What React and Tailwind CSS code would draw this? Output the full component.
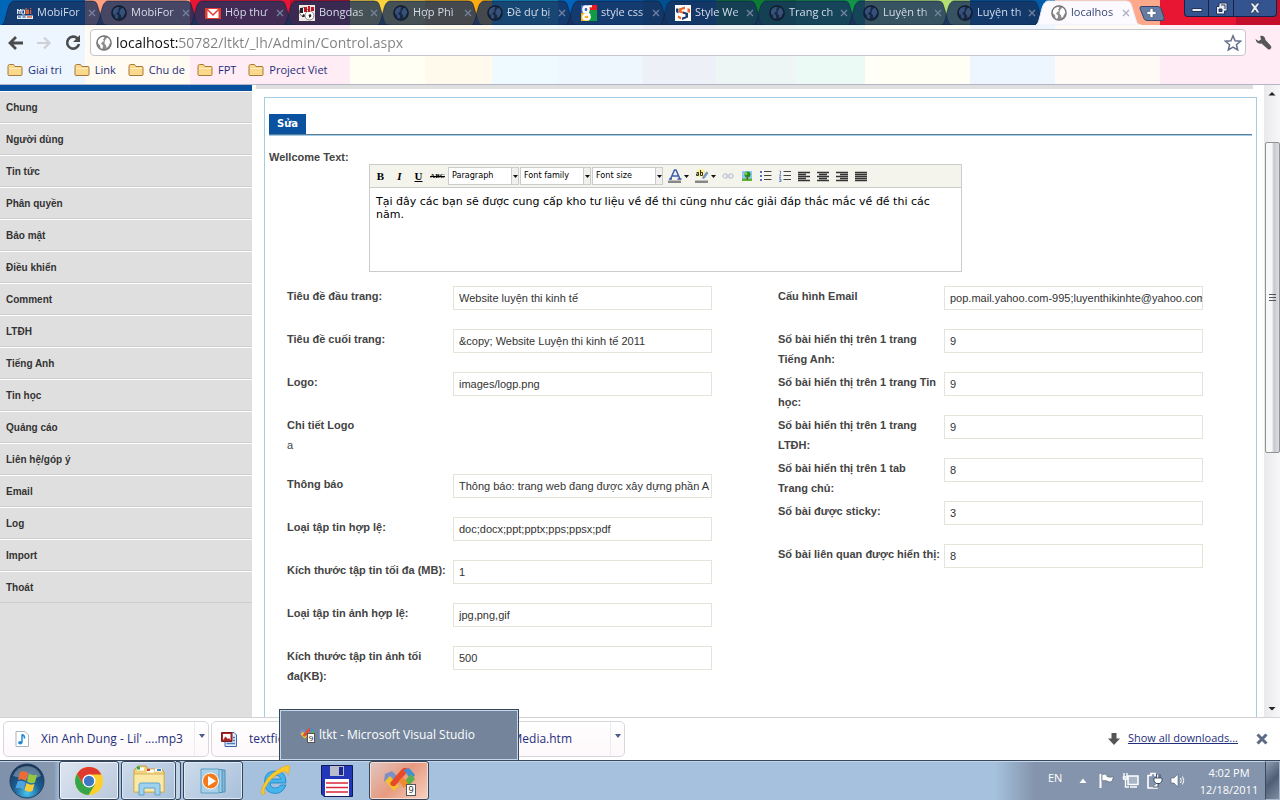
import React from "react";

function Globe({ dark }) {
  const land = dark ? "#36517c" : "#fff";
  const sea = dark ? "#1a2942" : "#8d8d8d";
  return (
    <svg viewBox="0 0 16 16" className="size-4 shrink-0" aria-hidden="true">
      <circle cx="8" cy="8" r="7.2" fill={sea} stroke={dark ? "#101a2c" : "#707070"} strokeWidth="1.2" />
      <path d="M2 5.500 4 3l3-1.300 1.500 1L7 4.500 8 6 6 7.200 5 9l1.800 1L7 12l-1 2-1.500-1L4 10 2 8.500z" fill={land} />
      <path d="m9.500 4.500 2-2 2 2.200.9 2.800-1 1.500-1.400 3-1.500.8-.5-2.600-1.500-1.400.2-2.300z" fill={land} />
    </svg>
  );
}

function MobiIcon() {
  return (
    <svg viewBox="0 0 16 16" className="size-4 shrink-0" aria-hidden="true">
      <path d="M0 4h1.500v1H3V4h1.500v5H3.500V6H2.700v3h-1V6H1v3H0z" fill="#dfe9f5" />
      <path d="M5 5h2.500v4H5z" fill="none" stroke="#dfe9f5" />
      <path d="M8.500 3h1.200v1.500H12V9H8.500zM13 3h1.200v1H13zM13 5h1.200v4H13z" fill="#e0643c" />
      <path d="M0 10.500h16V14H0z" fill="#e8eef7" />
      <path d="M1 12h3M5.500 12h3" stroke="#4a78b8" strokeWidth="1.500" />
      <path d="M10 12h5" stroke="#e0643c" strokeWidth="1.500" />
    </svg>
  );
}

function MailIcon() {
  return (
    <svg viewBox="0 0 16 16" className="size-4 shrink-0" aria-hidden="true">
      <path d="M0 3h16v11H0z" fill="#e23b30" />
      <path d="M3 4h10L8 9z" fill="#fff" />
      <path d="M2.500 5.500v7.500h11V5.500L8 11z" fill="#fff" />
    </svg>
  );
}

function BallIcon() {
  return (
    <svg viewBox="0 0 16 16" className="size-4 shrink-0" aria-hidden="true">
      <path d="M0 0h16v16H0z" fill="#efe9e2" />
      <circle cx="5" cy="7" r="4.500" fill="#fff" stroke="#777" />
      <circle cx="10.500" cy="10.500" r="4.500" fill="#fff" stroke="#888" />
      <path d="M1 3h3v5H1z" fill="#222" />
      <path d="M5 2h3v5H5zM9 1h2v6H9zM12 2h3v4h-3z" fill="#c01822" />
      <path d="m4 9 2 1-1 2H3zM9.500 10l2-1 1 2-2 2z" fill="#222" />
    </svg>
  );
}

function GoogleIcon() {
  return (
    <svg viewBox="0 0 16 16" className="size-4 shrink-0" aria-hidden="true">
      <path d="M0 0h9v8H0z" fill="#3c69c8" />
      <path d="M9 0h7v5H8z" fill="#ee1c1c" />
      <path d="M8 5h8v11H8z" fill="#129a44" />
      <path d="M0 8h8v8H0z" fill="#f4b41a" />
      <ellipse cx="5" cy="4.500" rx="2.600" ry="3" fill="none" stroke="#fff" strokeWidth="2.400" />
      <ellipse cx="5.500" cy="12" rx="3.200" ry="2.400" fill="none" stroke="#fff" strokeWidth="2.400" />
      <path d="M6 7.500 9 10M7 1.200h4" stroke="#fff" strokeWidth="2" />
    </svg>
  );
}

function SwirlIcon() {
  return (
    <svg viewBox="0 0 16 16" className="size-4 shrink-0" aria-hidden="true">
      <path d="M0 0h16v16H0z" fill="#fff" />
      <path d="M10 1.500 4 3.500v4L9 9V7L6.500 6V5L10 4z" fill="#f26522" />
      <path d="M1 3.500h2.500v5L1 7z" fill="#1c3f72" />
      <path d="m8 6.500 5 1.500v4.500L7 15v-2.500l3.500-1V9.500L8 8.500z" fill="#1c3f72" />
      <path d="M3 10.500 6 12v2.500L3 13zM12.500 3 15 4v4l-2.500-1z" fill="#f26522" />
    </svg>
  );
}

const TABS = [
  ["MobiFor", MobiIcon],
  ["MobiFor", null],
  ["Hộp thư", MailIcon],
  ["Bongdas", BallIcon],
  ["Hợp Phì", null],
  ["Đề dự bị", null],
  ["style css", GoogleIcon],
  ["Style We", SwirlIcon],
  ["Trang ch", null],
  ["Luyện th", null],
  ["Luyện th", null],
  ["localhos", null],
];

function BrowserTab({ title, Icon, active }) {
  return (
    <div className="relative flex h-[25px] w-[94px] shrink-0 items-center">
      <svg
        viewBox="0 0 108 25"
        className="pointer-events-none absolute top-0 left-0 h-[25px] w-[108px]"
        aria-hidden="true"
      >
        <path
          d="M0 25C4 24 5 5 9 2.500Q10 1 12 1H90Q94 1 95 4L100 20Q101 25 105 25z"
          fill={active ? "#fcfaff" : "#18315c"}
          fillOpacity={active ? 1 : 0.8}
          stroke={active ? "#e9edf7" : "#0b1d3f"}
          strokeOpacity={active ? 1 : 0.55}
        />
      </svg>
      <button
        className={`relative flex h-6 min-w-0 flex-1 items-center gap-1 pl-[15px] text-left text-[11px] whitespace-nowrap ${active ? "text-[#35456f]" : "text-[#d5dcea]"}`}
      >
        {Icon ? <Icon /> : <Globe dark={!active} />}
        <span className="min-w-0 flex-1 [mask-image:linear-gradient(90deg,#000_75%,#0006)]">
          {title}
        </span>
      </button>
      <button aria-label="Close tab" className="relative size-2 shrink-0">
        <svg viewBox="0 0 8 8" className="size-2">
          <path d="m1 1 6 6M7 1 1 7" stroke={active ? "#a7b0c9" : "#73839f"} strokeWidth="1.300" />
        </svg>
      </button>
    </div>
  );
}

function WindowButtons() {
  return (
    <div className="mr-[3px] flex h-[17px] overflow-hidden rounded-b-[4px] border border-t-0 border-[#13234a] bg-[#33548f]">
      <button aria-label="Minimize" className="flex w-6 items-center justify-center border-r border-[#13234a]">
        <svg viewBox="0 0 12 12" className="size-3">
          <path d="M1 6.500h10v3H1z" fill="#e8ecf4" stroke="#26355a" />
        </svg>
      </button>
      <button aria-label="Restore" className="flex w-[25px] items-center justify-center border-r border-[#13234a]">
        <svg viewBox="0 0 13 13" className="size-[13px]">
          <path d="M4 1h8v8H9.500v3H1.500V4.500H4z" fill="#e8ecf4" stroke="#26355a" />
          <path d="M4 7h3v2.500H4z" fill="#33548f" stroke="#26355a" />
          <path d="M6 3h4v4" fill="none" stroke="#26355a" />
        </svg>
      </button>
      <button aria-label="Close" className="flex w-[42px] items-center justify-center">
        <svg viewBox="0 0 12 12" className="size-3">
          <path d="M1 1h3l2 2.500L8 1h3L7.800 5.800 11 11H8L6 8l-2 3H1l3.200-5.200z" fill="#e8ecf4" stroke="#26355a" strokeWidth=".800" />
        </svg>
      </button>
    </div>
  );
}

function TabStrip() {
  return (
    <div className="flex h-[25px] shrink-0 overflow-hidden bg-[linear-gradient(90deg,#0067b8_0_85px,#ff9f80_85px_190px,#e81632_190px_290px,#c40f2c_290px_350px,#ffd23c_350px_425px,#f9ac10_425px_492px,#149bc9_492px_558px,#0064bd_558px_643px,#00508f_643px_716px,#0c7c34_716px_796px,#12934a_796px_865px,#b4dd72_865px_970px,#005da6_970px_1055px,#ffa98c_1055px_1160px,#e81632_1160px_1236px,#c40f2c_1236px)]">
      <div className="flex min-w-0 pl-0.5">
        {TABS.map(([title, Icon], i) => (
          <BrowserTab key={i} title={title} Icon={Icon} active={i === TABS.length - 1} />
        ))}
      </div>
      <button aria-label="New tab" className="ml-[9px] w-[26px] shrink-0">
        <svg viewBox="0 0 26 25" className="h-[25px] w-[26px]">
          <path d="M2 6.500h17q2 0 3 2l3 9q1 3-2 3H8q-2 0-3-2L1 8.500q0-2 1-2z" fill="#667da3" stroke="#33456e" />
          <path d="M11 8.500h3v3h3v3h-3v3h-3v-3H8v-3h3z" fill="#fff" stroke="#41547c" strokeWidth=".600" />
        </svg>
      </button>
      <div className="flex-1" />
      <WindowButtons />
    </div>
  );
}

function Toolbar() {
  return (
    <div className="flex h-[35px] shrink-0 items-center">
      <div className="flex shrink-0 items-center gap-3 pr-2 pl-2">
        <button aria-label="Back">
          <svg viewBox="0 0 16 16" className="size-4">
            <path d="M8 2 2 8l6 6M2.500 8H15" fill="none" stroke="#4b4b4b" strokeWidth="2.800" />
          </svg>
        </button>
        <button aria-label="Forward">
          <svg viewBox="0 0 16 16" className="size-4">
            <path d="m8 2.500 5.500 5.500L8 13.500M13 8H1" fill="none" stroke="#cfcfd4" strokeWidth="2.200" />
          </svg>
        </button>
        <button aria-label="Reload">
          <svg viewBox="0 0 18 18" className="size-[18px]">
            <path d="M13.500 4.500A6 6 0 1 0 15 10" fill="none" stroke="#4b4b4b" strokeWidth="2.600" />
            <path d="M16 1v7H9z" fill="#4b4b4b" />
          </svg>
        </button>
      </div>
      <div className="flex h-[27px] min-w-0 flex-1 items-center gap-1 rounded-[4px] border border-[#c3c6cd] bg-white pr-[3px] pl-[5px]">
        <Globe />
        <input
          aria-label="Address"
          defaultValue="localhost:50782/ltkt/_lh/Admin/Control.aspx"
          className="min-w-0 flex-1 bg-[linear-gradient(90deg,#111_62px,#808080_62px)] bg-clip-text text-[14px] text-transparent outline-none"
        />
        <button aria-label="Bookmark this page">
          <svg viewBox="0 0 18 18" className="size-[18px]">
            <path d="m9 1.800 2.100 5 5.400.400-4.100 3.500 1.300 5.300L9 13.100 4.300 16l1.300-5.300L1.500 7.200l5.400-.4z" fill="#fff" stroke="#65708a" strokeWidth="1.500" />
          </svg>
        </button>
      </div>
      <button aria-label="Settings" className="mr-2 ml-2">
        <svg viewBox="0 0 18 18" className="size-[18px]">
          <path d="M1.500 5 4.500 7 7 5.500 6.200 2Q10.500 1 11.500 6l5.300 5.700q1.200 1.800-.4 3.300-1.700 1.200-3.200-.4L7.500 9.500Q2.500 10.500 1.500 5z" fill="#565656" />
        </svg>
      </button>
    </div>
  );
}

function Folder() {
  return (
    <svg viewBox="0 0 16 14" className="h-[14px] w-4 shrink-0" aria-hidden="true">
      <path d="M1 3.500Q1 1.500 2.500 1.500h4L8 3.500h6q1 0 1 1v7q0 1-1 1H2q-1 0-1-1z" fill="#fbd98c" stroke="#a8793a" />
      <path d="M2 5.500h12" stroke="#fff0c4" />
    </svg>
  );
}

function Bookmarks() {
  return (
    <nav className="flex h-6 shrink-0 items-center gap-3 pb-1 pl-[7px] text-[11px] text-[#1f2f7c]">
      {["Giai tri", "Link", "Chu de", "FPT", "Project Viet"].map((name) => (
        <a key={name} href="#" className="flex items-center gap-[5px]">
          <Folder />
          {name}
        </a>
      ))}
    </nav>
  );
}

const MENU = [
  "Chung", "Người dùng", "Tin tức", "Phân quyền", "Bảo mật", "Điều khiển", "Comment", "LTĐH",
  "Tiếng Anh", "Tin học", "Quảng cáo", "Liên hệ/góp ý", "Email", "Log", "Import", "Thoát",
];

function Sidebar() {
  return (
    <nav className="w-[252px] shrink-0 border-t-[6px] border-[#0a529f] bg-[#dfdfdf]">
      {MENU.map((name) => (
        <a
          key={name}
          href="#"
          className="flex h-8 items-center border-t border-b border-t-white border-b-[#cdcdcd] pl-1.5 text-[10px] font-bold text-[#333]"
        >
          {name}
        </a>
      ))}
    </nav>
  );
}

function ToolSelect({ name }) {
  return (
    <div className="relative flex">
      <select
        aria-label={name}
        className="h-[18px] w-[71px] appearance-none border border-[#ccc] bg-white pl-[3px] font-['DejaVu_Sans_Condensed','DejaVu_Sans',sans-serif] text-[9px] text-black"
      >
        <option>{name}</option>
      </select>
      <span className="pointer-events-none absolute inset-y-px right-px flex w-[7px] items-center justify-center border-l border-[#ccc] bg-[#f0f0ee]">
        <Caret />
      </span>
    </div>
  );
}

function Caret() {
  return (
    <svg viewBox="0 0 5 3" className="h-[3px] w-[5px] shrink-0" aria-hidden="true">
      <path d="M0 0h5L2.500 3z" fill="#111" />
    </svg>
  );
}

function ToolButton({ label, className, children }) {
  return (
    <button aria-label={label} className={`flex h-5 w-[19px] items-center justify-center ${className || ""}`}>
      {children}
    </button>
  );
}

function AlignIcon({ d }) {
  return (
    <svg viewBox="0 0 12 11" className="h-[11px] w-3">
      <path d={d} stroke="#333" strokeWidth="1.300" />
    </svg>
  );
}

function Editor() {
  return (
    <div className="ml-[100px] w-[593px] border border-[#ccc] bg-white">
      <div className="flex h-[23px] items-center border-b border-[#ccc] bg-[#f5f4ec] pl-px font-['Liberation_Serif',serif] text-[11px] text-black">
        <ToolButton label="Bold"><b>B</b></ToolButton>
        <ToolButton label="Italic"><b className="italic">I</b></ToolButton>
        <ToolButton label="Underline"><b className="underline">U</b></ToolButton>
        <ToolButton label="Strikethrough"><span className="text-[7px] font-bold line-through">ABC</span></ToolButton>
        <div className="ml-px flex gap-px">
          <ToolSelect name="Paragraph" />
          <ToolSelect name="Font family" />
          <ToolSelect name="Font size" />
        </div>
        <ToolButton label="Text color" className="ml-0.5">
          <svg viewBox="0 0 14 14" className="size-3.5">
            <path d="M2.500 10 6.500 1h1.500l4 9M4.500 7h5.500M1 10h3M9.500 10h4" fill="none" stroke="#3a5da8" strokeWidth="1.500" />
            <path d="M0 11.500h13v2.500H0z" fill="#888" />
          </svg>
        </ToolButton>
        <Caret />
        <ToolButton label="Background color" className="ml-[3px]">
          <svg viewBox="0 0 14 14" className="size-3.5">
            <circle cx="6" cy="4" r="4" fill="#fbf08a" />
            <path d="M1.500 3.500h2v3h-2v-1.500h2M5.500 1v5.500h2v-3h-2" fill="none" stroke="#333" />
            <path d="m7.500 9 4-6 1.500 1-4 5.500z" fill="#7ea3dc" stroke="#4468ac" strokeWidth=".600" />
            <path d="M0 11.500h13v2.500H0z" fill="#888" />
          </svg>
        </ToolButton>
        <Caret />
        <ToolButton label="Link" className="ml-0.5">
          <svg viewBox="0 0 12 8" className="h-2 w-3" fill="none" stroke="#c5cbd8" strokeWidth="1.300">
            <rect x="1" y="2" width="4.500" height="4" rx="2" />
            <rect x="6.500" y="2" width="4.500" height="4" rx="2" />
            <path d="M4 4h4" />
          </svg>
        </ToolButton>
        <ToolButton label="Insert image">
          <svg viewBox="0 0 12 12" className="size-3">
            <path d="M1 1h10v10H1z" fill="#8cc6f4" />
            <path d="M1 8.500h10V11H1z" fill="#58b82f" />
            <path d="M5.500 6h1.500v4H5.500z" fill="#80501c" />
            <circle cx="6.500" cy="4.500" r="3" fill="#278b1b" />
            <circle cx="5" cy="3.500" r="1.500" fill="#7fce40" />
          </svg>
        </ToolButton>
        <ToolButton label="Bulleted list">
          <svg viewBox="0 0 12 12" className="size-3">
            <path d="M4 1.500h7.500M4 5.500h7.500M4 9.500h7.500" stroke="#444" />
            <path d="M0 1h2v2H0zM0 5h2v2H0zM0 9h2v2H0z" fill="#4d73c4" />
          </svg>
        </ToolButton>
        <ToolButton label="Numbered list">
          <svg viewBox="0 0 12 12" className="size-3">
            <path d="M4.500 1.500H12M4.500 5.500H12M4.500 9.500H12" stroke="#444" />
            <path d="M.500 1h1v3M0 5h2L.500 7.500H2M0 9h2v2.500H0M2 10H.500" fill="none" stroke="#4d73c4" strokeWidth=".800" />
          </svg>
        </ToolButton>
        <ToolButton label="Align left"><AlignIcon d="M0 1.500h12M0 3.500h8M0 5.500h12M0 7.500h8M0 9.500h12" /></ToolButton>
        <ToolButton label="Align center"><AlignIcon d="M0 1.500h12M2 3.500h8M0 5.500h12M2 7.500h8M0 9.500h12" /></ToolButton>
        <ToolButton label="Align right"><AlignIcon d="M0 1.500h12M4 3.500h8M0 5.500h12M4 7.500h8M0 9.500h12" /></ToolButton>
        <ToolButton label="Justify"><AlignIcon d="M0 1.500h12M0 3.500h12M0 5.500h12M0 7.500h12M0 9.500h12" /></ToolButton>
      </div>
      <textarea
        id="welcome"
        defaultValue="Tại đây các bạn sẽ được cung cấp kho tư liệu về đề thi cũng như các giải đáp thắc mắc về đề thi các năm."
        className="block h-[83px] w-full resize-none px-1.5 py-[7px] font-['DejaVu_Sans',sans-serif] text-[11px] leading-[13px] text-black outline-none"
      />
    </div>
  );
}

function Field({ id, label, value }) {
  return (
    <div className="flex min-h-[43px] items-start">
      <label htmlFor={id} className="w-[166px] shrink-0 leading-5 font-bold">
        {label}
      </label>
      <input
        id={id}
        defaultValue={value}
        className="h-6 w-[259px] border border-[#e4e4d8] bg-white pr-0 pl-[5px] text-[11px] text-[#333] outline-none"
      />
    </div>
  );
}

const LEFT_TOP = [
  ["Tiêu đề đầu trang:", "Website luyện thi kinh tế"],
  ["Tiêu đề cuối trang:", "&copy; Website Luyện thi kinh tế 2011"],
  ["Logo:", "images/logp.png"],
];
const LEFT_BOTTOM = [
  ["Thông báo", "Thông báo: trang web đang được xây dựng phần A"],
  ["Loại tập tin hợp lệ:", "doc;docx;ppt;pptx;pps;ppsx;pdf"],
  ["Kích thước tập tin tối đa (MB):", "1"],
  ["Loại tập tin ảnh hợp lệ:", "jpg,png,gif"],
  ["Kích thước tập tin ảnh tối đa(KB):", "500"],
];
const RIGHT = [
  ["Cấu hình Email", "pop.mail.yahoo.com-995;luyenthikinhte@yahoo.com"],
  ["Số bài hiển thị trên 1 trang Tiếng Anh:", "9"],
  ["Số bài hiển thị trên 1 trang Tin học:", "9"],
  ["Số bài hiển thị trên 1 trang LTĐH:", "9"],
  ["Số bài hiển thị trên 1 tab Trang\u00a0chủ:", "8"],
  ["Số bài được sticky:", "3"],
  ["Số bài liên quan được hiển thị:", "8"],
];

function Fields({ name, rows }) {
  return rows.map(([label, value], i) => (
    <Field key={label} id={`${name}-${i}`} label={label} value={value} />
  ));
}

function MainPanel() {
  return (
    <main className="flex min-w-0 flex-1 flex-col overflow-hidden bg-white pl-1 text-[11px] text-[#444]">
      <div className="mr-[11px] h-1 shrink-0 bg-[#dfdfdf]" />
      <section className="mt-2 mr-[7px] ml-2 flex-1 border border-b-0 border-[#a2cde4] px-1 pt-4">
        <div className="flex border-b border-[#a2cde4]">
          <h2 className="flex-1 border-b border-[#5d7c9c]">
            <span className="inline-block h-5 bg-[#0a529f] px-2 align-top font-['DejaVu_Sans',sans-serif] text-[10px] leading-5 font-bold text-white">
              Sửa
            </span>
          </h2>
        </div>
        <label htmlFor="welcome" className="mt-[11px] block h-[17px] leading-5 font-bold">
          Wellcome Text:
        </label>
        <Editor />
        <div className="mt-3.5 grid grid-cols-2 pr-px">
          <div className="pl-[18px]">
            <Fields name="left" rows={LEFT_TOP} />
            <div className="h-[59px] leading-5">
              <p className="font-bold">Chi tiết Logo</p>
              <p>a</p>
            </div>
            <Fields name="more" rows={LEFT_BOTTOM} />
          </div>
          <div className="pl-[18px]">
            <Fields name="right" rows={RIGHT} />
          </div>
        </div>
      </section>
    </main>
  );
}

function ScrollBar() {
  return (
    <div className="flex w-4 shrink-0 flex-col items-center bg-[linear-gradient(90deg,#e9e9eb,#f7f7f8)]">
      <svg viewBox="0 0 16 17" className="h-[17px] w-4 shrink-0">
        <path d="m8 7 3.500 3.500h-7z" fill="#222" />
      </svg>
      <div className="h-10 shrink-0" />
      <div className="flex h-[311px] w-[15px] shrink-0 items-center justify-center rounded-[2px] border border-[#909195] bg-[linear-gradient(90deg,#f8f8f8_0_45%,#c6c8d0_60%,#dcdde2)]">
        <svg viewBox="0 0 7 9" className="h-[9px] w-[7px]">
          <path d="M0 1.500h7M0 4.500h7M0 7.500h7" stroke="#555" strokeWidth="1.200" />
        </svg>
      </div>
      <div className="flex-1" />
      <svg viewBox="0 0 16 17" className="h-[17px] w-4 shrink-0">
        <path d="m8 10.500 3.500-3.500h-7z" fill="#222" />
      </svg>
    </div>
  );
}

function NoteIcon() {
  return (
    <svg viewBox="0 0 14 16" className="h-4 w-3.5 shrink-0" aria-hidden="true">
      <path d="M1 .500h9l3.500 3.500v11.500H1z" fill="#fff" stroke="#a5b3c2" />
      <path d="M7 3.500v8M7 3.500q3 1 2.500 4" fill="none" stroke="#2188d8" strokeWidth="1.500" />
      <ellipse cx="5.300" cy="11.800" rx="2.200" ry="1.700" fill="#2188d8" />
    </svg>
  );
}

function PictureIcon() {
  return (
    <svg viewBox="0 0 16 16" className="size-4 shrink-0" aria-hidden="true">
      <path d="M4 1.500h9l2.500 2.500V15.500H4z" fill="#dfeafa" stroke="#3f66a8" />
      <path d="M.500 1.500h10.500v9H.500z" fill="#a8282c" stroke="#7e1a1e" />
      <path d="M2 3h7.500v6H2z" fill="#fff" />
      <path d="m2 9 2.500-3.500L7 8l1-1 1.500 2z" fill="#a8282c" />
      <path d="M5.500 12.500h8.500M12 6.500h2M12 9.500h2" stroke="#4f7cc0" strokeWidth="1.500" />
    </svg>
  );
}

function Download({ Icon, name, className }) {
  return (
    <div className="flex h-9 w-[206px] overflow-hidden rounded-[5px] border border-[#d9d7dd] bg-[linear-gradient(#fff,#fdf8fb)]">
      <button className={`flex min-w-0 flex-1 items-center ${className}`}>
        {Icon && <Icon />}
        <span>{name}</span>
      </button>
      <button aria-label="Download options" className="flex w-3.5 justify-center border-l border-[#ecebee] pt-3">
        <svg viewBox="0 0 6 4" className="h-1 w-1.5">
          <path d="M0 0h6L3 4z" fill="#4c5d8b" />
        </svg>
      </button>
    </div>
  );
}

function StudioIcon({ className }) {
  return (
    <svg viewBox="0 0 34 30" className={className} aria-hidden="true">
      <path d="M3 8 10 5l5 5-7 8-6-3z" fill="#7b8fc8" />
      <path d="m3 15 5-5 9 10-5 5z" fill="#f2c22c" />
      <path d="M8 17 20 3q4-3 7 1L13 20q-4 1-5-3z" fill="#e64a2a" />
      <path d="m22 4 5-2 6 7-4 5z" fill="#3f8fd6" />
      <path d="m29 8 4 5-7 8-4-5z" fill="#5cb04c" />
      <path d="m17 15 4-4 5 6-4 5z" fill="#ef8b2c" />
    </svg>
  );
}

function Studio({ large }) {
  return (
    <span className={large ? "relative flex h-[30px] w-[34px]" : "relative flex size-4"}>
      <StudioIcon className={large ? "h-[30px] w-[34px]" : "h-3.5 w-4"} />
      <span
        className={
          large
            ? "absolute right-0 bottom-0 h-3 w-2.5 border border-[#555] bg-white text-center text-[9px] leading-[10px] text-[#222]"
            : "absolute right-0 bottom-0 h-2.5 w-2 border border-[#555] bg-white text-center text-[8px] leading-[8px] text-[#222]"
        }
      >
        9
      </span>
    </span>
  );
}

function Downloads() {
  return (
    <div className="flex h-[43px] shrink-0 items-center gap-0.5 border-t border-[#d4d2d8] bg-white pb-px pl-[3px] text-[12px] text-[#1f2f7c]">
      <Download Icon={NoteIcon} name="Xin Anh Dung - Lil' ....mp3" className="gap-3 pl-[11px]" />
      <Download Icon={PictureIcon} name="textfield" className="gap-3 pl-[9px]" />
      <Download name="Media.htm" className="justify-end pr-[38px]" />
      <div className="flex-1" />
      <svg viewBox="0 0 12 12" className="mr-1.5 size-3">
        <path d="M3.500 0h5v5.500H12L6 12 0 5.500h3.500z" fill="#555" />
      </svg>
      <a href="#" className="text-[11px] underline">Show all downloads...</a>
      <button aria-label="Close downloads" className="mr-3 ml-4">
        <svg viewBox="0 0 12 12" className="size-3">
          <path d="m1.500 1.500 9 9M10.500 1.500l-9 9" stroke="#5b6b85" strokeWidth="3" />
        </svg>
      </button>
    </div>
  );
}

function TaskButton({ label, className, children }) {
  return (
    <button aria-label={label} className={`flex h-[39px] shrink-0 items-center justify-center ${className}`}>
      {children}
    </button>
  );
}

function StartOrb() {
  return (
    <svg viewBox="0 0 36 36" className="size-9" aria-hidden="true">
      <defs>
        <radialGradient id="orb" cx=".5" cy=".85" r=".8">
          <stop offset="0" stopColor="#48c4ee" />
          <stop offset=".5" stopColor="#1c5d92" />
          <stop offset="1" stopColor="#17375c" />
        </radialGradient>
      </defs>
      <circle cx="18" cy="18" r="17" fill="url(#orb)" stroke="#213c5c" />
      <path d="M4 13Q8 3 18 3t14 10q-7 4-14 3T4 13z" fill="#fff" opacity=".3" />
      <path d="M11 9q4-2 8 1l-2 8q-4-3-8-1z" fill="#ef6b33" />
      <path d="M20 10.500q4 3 8 1l-2 8q-4 2-8-1z" fill="#96c83c" />
      <path d="M8.500 18.500q4-2 8 1l-2 7q-4-3-8-1z" fill="#4fa3e0" />
      <path d="M17.500 20q4 3 8 1l-2 7q-4 2-8-1z" fill="#fccb35" />
    </svg>
  );
}

function ChromeIcon() {
  return (
    <svg viewBox="0 0 28 28" className="size-7" aria-hidden="true">
      <circle cx="14" cy="14" r="14" fill="#fbd02c" />
      <path d="M1.900 7A14 14 0 0 1 26.500 7.500H14L8 17z" fill="#e03a2e" />
      <path d="M1.900 7A14 14 0 0 0 13.500 28L20 17.500 8 17z" fill="#36a54a" />
      <circle cx="14" cy="14" r="6.500" fill="#fff" />
      <circle cx="14" cy="14" r="5.200" fill="#3d78c6" />
    </svg>
  );
}

function ExplorerIcon() {
  return (
    <svg viewBox="0 0 32 31" className="h-[31px] w-8" aria-hidden="true">
      <path d="M2 4 5 1h8l2 3h14l2 3v20H1V6z" fill="#f1d27c" stroke="#c79b3c" />
      <path d="M4 4h7M14 6h7M22 5h7" stroke="#fff" strokeWidth="3" />
      <path d="M4 3h3" stroke="#2ba84a" strokeWidth="3" />
      <path d="M14 5h3" stroke="#d43c2c" strokeWidth="2" />
      <path d="M24 5h4" stroke="#2f86dc" strokeWidth="2" />
      <path d="M1 9h30v18H1z" fill="#fae9a6" stroke="#d9b65d" />
      <path d="M6 30V20q0-2 2-2h17q2 0 2 2v10h-5v-7H11v7z" fill="#9fd2ef" stroke="#5fa5d0" />
    </svg>
  );
}

function PlayerIcon() {
  return (
    <svg viewBox="0 0 28 28" className="size-7" aria-hidden="true">
      <path d="M8 3h18v22H8z" fill="#7fb7d8" stroke="#4a90ba" />
      <path d="M5 2.500h18v23H5z" fill="#a5d2ea" stroke="#4a90ba" />
      <path d="M2 2h18v24H2z" fill="#a9d0e6" stroke="#5c9fc4" />
      <circle cx="11.500" cy="14" r="8" fill="#f27a1c" stroke="#fff" />
      <path d="m9 9 8 5-8 5z" fill="#fff" />
    </svg>
  );
}

function ExplorerE() {
  return (
    <svg viewBox="0 0 32 32" className="size-8" aria-hidden="true">
      <path d="M27 18H11q.5 5 5.500 5 3.500 0 5-3h5.500Q24 28.500 16 28.500 5.500 28 5.500 17T16.500 6 27 18zM11 14h11q-1-4-5.500-4T11 14z" fill="#45b5ec" stroke="#1f83c4" strokeWidth=".8" />
      <path d="M7 28Q1 32 2.500 25 6 12 20 4t10 1q.5 2-1 5 0-5-6-3Q11 12 5.500 24 4 29 7 28z" fill="#fbc928" stroke="#e09d18" strokeWidth=".5" />
    </svg>
  );
}

function Floppy() {
  return (
    <svg viewBox="0 0 32 32" className="size-8" aria-hidden="true">
      <path d="M.500.500h31v31H3L.500 29z" fill="#2436b8" stroke="#10195c" />
      <path d="M9 1h14v10H9z" fill="#b8bccb" />
      <path d="M18 2h4v8h-4z" fill="#1b2a92" />
      <path d="M4 14h24v17H4z" fill="#fff" />
      <path d="M5 18h22M5 22.500h22M5 27h22" stroke="#d8283a" strokeWidth="1.400" />
    </svg>
  );
}

function Tray() {
  return (
    <div className="flex shrink-0 items-center text-[11px] text-white">
      <span className="mb-1 w-[27px]">EN</span>
      <button aria-label="Show hidden icons" className="mr-[11px] ml-1">
        <svg viewBox="0 0 8 6" className="h-1.5 w-2">
          <path d="m4 .500 3.500 4.500h-7z" fill="#fff" />
        </svg>
      </button>
      <div className="mr-3 flex items-center gap-[7px]">
        <svg viewBox="0 0 17 17" className="size-[17px]">
          <path d="M2.500 2v14" stroke="#fff" strokeWidth="2" />
          <path d="M4 2.500q3-1 5 .5v1.500q3 1.500 6.500 0l-1.500 5q-2.500 1-5-.5-2.500-1-5 0z" fill="#fff" stroke="#586a80" strokeWidth=".7" />
        </svg>
        <svg viewBox="0 0 17 17" className="size-[17px]">
          <path d="M6 4h10v8.500H6z" fill="#a9b6c6" stroke="#fff" strokeWidth="1.500" />
          <path d="M8 15h7" stroke="#fff" strokeWidth="1.500" />
          <path d="M2 1v4M5 1v4M1.500 5h4v2h-4zM3.500 7v8H7" fill="none" stroke="#fff" strokeWidth="1.400" />
        </svg>
        <svg viewBox="0 0 17 17" className="size-[17px]">
          <path d="M5 1.500h4v2h2V16H2V3.500h3z" fill="#8494ac" stroke="#fff" strokeWidth="1.600" />
          <path d="M10.500 2v4M14 2v4M8 6h8v3l-2 2.500h-4L8 9zM12 11v4H7" fill="#fff" stroke="#38485e" strokeWidth=".9" />
        </svg>
        <svg viewBox="0 0 17 17" className="size-[17px]">
          <path d="M1 6h3l4-4v13l-4-4H1z" fill="#fff" stroke="#4d5f78" strokeWidth=".6" />
          <path d="M10.500 6q1.500 2.500 0 5M12.500 4.500q2.500 4 0 8" fill="none" stroke="#fff" />
        </svg>
      </div>
      <div className="mr-1.5 w-[60px] text-center leading-[17px]">
        <div>4:02 PM</div>
        <div>12/18/2011</div>
      </div>
      <button
        aria-label="Show desktop"
        className="h-[39px] w-[15px] border border-[#aab8cb] border-l-[#3c4a5e] bg-[linear-gradient(135deg,#8c9bb0,#4f5e74_50%,#7f8ea4)]"
      />
    </div>
  );
}

function Taskbar() {
  return (
    <footer className="relative flex h-10 shrink-0 border-t border-[#39475a] bg-[linear-gradient(90deg,#7e90aa_0,#8799b1_54px,#a5c1de_60px,#a5c1de_calc(100%-285px),#8494ac_calc(100%-245px))] shadow-[inset_0_1px_0_#c3d5e8]">
      <TaskButton label="Start" className="w-[54px]"><StartOrb /></TaskButton>
      <TaskButton label="Google Chrome" className="ml-[5px] w-[60px] rounded-[3px] border border-[#35455b] bg-[linear-gradient(135deg,#dde5f0,#b9c8dc)] shadow-[inset_0_0_0_1px_#eef3f9]"><ChromeIcon /></TaskButton>
      <TaskButton label="Windows Explorer" className="ml-0.5 w-[55px] rounded-[3px] border border-[#35455b] bg-[linear-gradient(135deg,#cddbeb,#a9c0da)] shadow-[inset_0_0_0_1px_#dfe9f4]"><ExplorerIcon /></TaskButton>
      <span className="h-[39px] w-[5px] rounded-r-[3px] border border-l-0 border-[#35455b] bg-[#c0d1e4]" />
      <TaskButton label="Media Player" className="ml-0.5 w-[60px] rounded-[3px] border border-[#35455b] bg-[linear-gradient(135deg,#cddbeb,#a9c0da)] shadow-[inset_0_0_0_1px_#dfe9f4]"><PlayerIcon /></TaskButton>
      <TaskButton label="Internet Explorer" className="ml-0.5 w-[60px]"><ExplorerE /></TaskButton>
      <TaskButton label="Save" className="ml-0.5 w-[60px]"><Floppy /></TaskButton>
      <TaskButton label="Microsoft Visual Studio" className="ml-0.5 w-[60px] rounded-[3px] border border-[#35455b] bg-[linear-gradient(135deg,#dfc7c3,#e79a80_50%,#f6d2c2)] shadow-[inset_0_0_0_1px_#f7ddd2]"><Studio large /></TaskButton>
      <div className="flex-1" />
      <Tray />
      <div
        role="tooltip"
        className="absolute bottom-full left-[279px] flex h-[52px] w-60 items-center gap-1 border border-[#36465c] bg-[#74859b] pl-[19px] text-[12px] text-white shadow-[inset_0_0_0_1px_#c4d6ea]"
      >
        <Studio />
        ltkt - Microsoft Visual Studio
      </div>
    </footer>
  );
}

export default function App() {
  return (
    <div className="flex h-screen flex-col overflow-hidden bg-white font-['Open_Sans','Noto_Sans',sans-serif]">
      <TabStrip />
      <header className="shrink-0 border-b border-[#b3b6c6] bg-[linear-gradient(90deg,#edf6ff_0_85px,#fffaf2_85px_190px,#ffecf4_190px_350px,#fffff4_350px_425px,#fffaeb_425px_492px,#eefaff_492px_558px,#eef6fe_558px_643px,#edf0f7_643px_716px,#edf6f5_716px_796px,#ecfaf6_796px_865px,#fffff5_865px_970px,#edf6ff_970px_1055px,#fffaf5_1055px_1160px,#ffecf4_1160px)]">
        <Toolbar />
        <Bookmarks />
      </header>
      <div className="flex min-h-0 flex-1 overflow-hidden font-['Liberation_Sans',Arial,sans-serif]">
        <Sidebar />
        <MainPanel />
        <ScrollBar />
      </div>
      <Downloads />
      <Taskbar />
    </div>
  );
}
